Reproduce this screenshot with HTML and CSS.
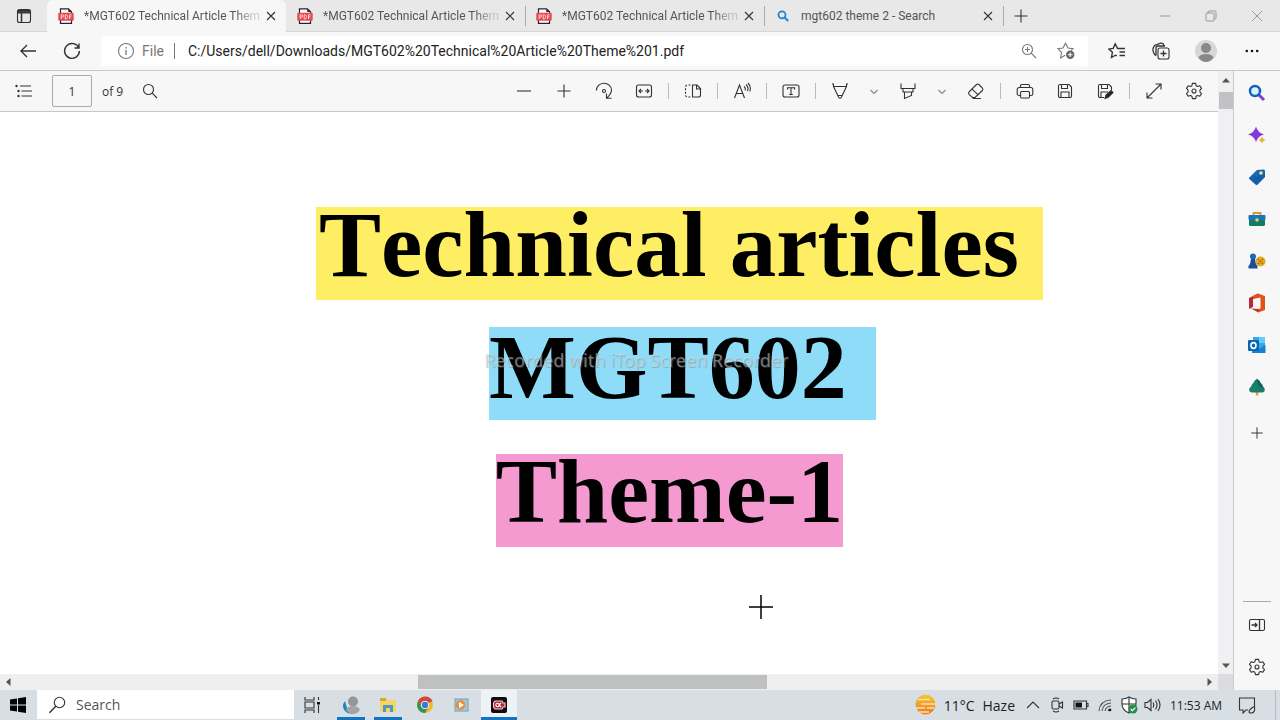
FILE: index.html
```html
<!DOCTYPE html>
<html lang="en">
<head>
<meta charset="utf-8">
<title>MGT602 Technical Article Theme 1.pdf</title>
<link rel="stylesheet" href="styles.css">
</head>
<body>
<svg class="defs" aria-hidden="true">
  <symbol id="pdf" viewBox="0 0 16 16"><path d="M2.500 .8h8l3 3v11.500h-11z" fill="#fff" stroke="#2b2122" stroke-width="1.200"/><path d="M10.300.8v3.200h3.200z" fill="#2b2122"/><rect x=".3" y="4.800" width="15.400" height="8" rx="1" fill="#e5494f"/><path d="M3.200 11V6.800h1.300a1.100 1.100 0 0 1 0 2.300H3.200M7.200 6.800V11h.8c2 0 2-4.200 0-4.200zM11.500 11V6.800h2.300M11.500 8.900H13.400" fill="none" stroke="#ffe3e3" stroke-width=".9"/></symbol>
  <symbol id="x" viewBox="0 0 16 16"><path d="M4 4l8 8M12 4l-8 8"/></symbol>
  <symbol id="plus" viewBox="0 0 16 16"><path d="M8 1.500v13M1.500 8h13"/></symbol>
  <symbol id="chev" viewBox="0 0 16 16"><path d="M4.500 7L8 10.500 11.500 7"/></symbol>
  <symbol id="gear" viewBox="0 0 18 18"><path d="M7.400 1.400h3.200l.5 2.300 1.500.8 2.200-.8 1.700 2.700-1.600 1.700v1.800l1.600 1.700-1.700 2.700-2.200-.8-1.500.8-.5 2.300H7.400l-.5-2.300-1.500-.8-2.200.8-1.700-2.700 1.600-1.700V8.100L1.500 6.400l1.700-2.700 2.200.8 1.500-.8z" stroke-linejoin="round"/><circle cx="9" cy="9" r="2"/></symbol>
</svg>
<div class="app">
  <header class="tabstrip">
    <button class="tab-actions" aria-label="Tab actions"><svg class="i16" viewBox="0 0 16 16"><rect x="1.500" y="1.500" width="13" height="13" rx="2"/><path d="M1.500 3.500h13M5.500 5v9.500" stroke-width="1.500"/><path d="M2 2.500h12v2.500H2z" fill="#444"/></svg></button>
    <div class="tab active"><svg class="i16 fav"><use href="#pdf"/></svg><a class="title fade" href="#doc">*MGT602 Technical Article Them</a><button aria-label="Close tab"><svg class="i16"><use href="#x"/></svg></button></div>
    <div class="tab"><svg class="i16 fav"><use href="#pdf"/></svg><a class="title fade" href="#doc">*MGT602 Technical Article Them</a><button aria-label="Close tab"><svg class="i16"><use href="#x"/></svg></button></div>
    <div class="tab"><svg class="i16 fav"><use href="#pdf"/></svg><a class="title fade" href="#doc">*MGT602 Technical Article Them</a><button aria-label="Close tab"><svg class="i16"><use href="#x"/></svg></button></div>
    <div class="tab"><svg class="i16 fav" viewBox="0 0 16 16"><circle cx="7" cy="6.800" r="3.500" stroke="#2383cf" stroke-width="1.800"/><path d="M9.700 9.500l3.500 3.500" stroke="#2383cf" stroke-width="2"/></svg><a class="title" href="#doc">mgt602 theme 2 - Search</a><button aria-label="Close tab"><svg class="i16"><use href="#x"/></svg></button></div>
    <button class="new-tab" aria-label="New tab"><svg class="i16"><use href="#plus"/></svg></button>
    <div class="window-controls">
      <button aria-label="Minimize"><svg class="i16" viewBox="0 0 16 16"><path d="M3 8h10"/></svg></button>
      <button aria-label="Restore"><svg class="i16" viewBox="0 0 16 16"><rect x="3" y="5" width="8" height="8" rx="1"/><path d="M5 5V4a1 1 0 0 1 1-1h6a1 1 0 0 1 1 1v6a1 1 0 0 1-1 1h-1"/></svg></button>
      <button aria-label="Close window"><svg class="i16" viewBox="0 0 16 16"><path d="M3 3l10 10M13 3L3 13"/></svg></button>
    </div>
  </header>

  <nav class="addressbar">
    <button aria-label="Back"><svg class="i18" viewBox="0 0 18 18"><path d="M17 9H2M8 3L2 9l6 6" stroke-width="1.400"/></svg></button>
    <button aria-label="Refresh"><svg class="i18" viewBox="0 0 18 18"><path d="M15.800 6A7.400 7.400 0 1 0 16.400 9M16 1.500V6h-4.500" stroke-width="1.400"/></svg></button>
    <div class="omnibox">
      <svg class="i18 grey" viewBox="0 0 18 18"><circle cx="9" cy="9" r="7.500"/><path d="M9 8v5M9 5v1.500" stroke-width="1.300"/></svg>
      <label class="scheme" for="url">File</label>
      <span class="bar"></span>
      <input id="url" type="text" value="C:/Users/dell/Downloads/MGT602%20Technical%20Article%20Theme%201.pdf">
      <button aria-label="Zoom"><svg class="i16 grey" viewBox="0 0 16 16"><circle cx="6.500" cy="6.500" r="5"/><path d="M10.200 10.200L15 15M4 6.500h5M6.500 4v5"/></svg></button>
      <button aria-label="Add to favorites"><svg class="i18 grey" viewBox="0 0 18 18"><path d="M8.200 13.200l-4.600 2.700.9-5.400L1 6.700l5-.7L8.500 1.200 11 6l5 .7-2 2"/><circle cx="13.200" cy="12.800" r="4.200" fill="#666" stroke="none"/><path d="M13.200 10.500v4.600M10.900 12.800h4.600" stroke="#fff"/></svg></button>
    </div>
    <button class="favorites" aria-label="Favorites"><svg class="i18" viewBox="0 0 18 18"><path d="M11 6.500H9.600L7.200 1.800 5.200 6.400.8 7l3.600 3.300-.9 5.200 4-2.300 1.300.7M11 6.500h6M11.500 10H17M11.500 13.500H17" stroke-width="1.400"/></svg></button>
    <button aria-label="Collections"><svg class="i18" viewBox="0 0 18 18"><rect x="6" y="6" width="11" height="11" rx="2"/><path d="M11.500 8.500v6M8.500 11.500h6M4 13.500C2 13 .8 9 1 6.500L2.500 3.500 8.500 1.200c1.500-.3 3 0 3.500 2.200M4 13.500V6q0-2 2-2h7" stroke-width="1.300"/></svg></button>
    <button class="wide" aria-label="Profile"><svg class="i22" viewBox="0 0 22 22"><circle cx="11" cy="11" r="11" fill="#d8d7d4" stroke="none"/><circle cx="11" cy="8" r="5" fill="#888" stroke="none"/><path d="M3.500 17.500Q5 14 11 14t7.500 3.500Q15 22 11 22t-7.500-4.500z" fill="#888" stroke="none"/></svg></button>
    <button class="wide" aria-label="More"><svg class="i16" viewBox="0 0 16 16"><g fill="#111" stroke="none"><circle cx="2.800" cy="8" r="1.300"/><circle cx="8" cy="8" r="1.300"/><circle cx="13.200" cy="8" r="1.300"/></g></svg></button>
  </nav>

  <div class="body">
    <section class="viewer">
      <div class="main-col">
        <div class="toolbar">
          <button class="contents" aria-label="Contents"><svg class="i18" viewBox="0 0 18 18"><path d="M5 4h11M6.500 9H17M6.500 14H17"/><g fill="#333" stroke="none"><circle cx="1.500" cy="4" r="1.200"/><circle cx="3.500" cy="9" r="1.200"/><circle cx="3.500" cy="14" r="1.200"/></g></svg></button>
          <input class="page-no" id="page" type="text" value="1"><label for="page">of 9</label>
          <button class="find" aria-label="Find"><svg class="i16" viewBox="0 0 16 16"><circle cx="6.500" cy="6.500" r="5"/><path d="M10.200 10.200L15 15"/></svg></button>
          <div class="tools">
            <button aria-label="Zoom out"><svg class="i16" viewBox="0 0 16 16"><path d="M1 8h14"/></svg></button>
            <button aria-label="Zoom in"><svg class="i16"><use href="#plus"/></svg></button>
            <button aria-label="Rotate"><svg class="i18" viewBox="0 0 18 18"><path d="M1.500 8.500A7.500 7 0 0 1 16.500 8c0 3.500-2 5.500-4.500 7.800M11.500 11.500v4.800h5"/><circle cx="9" cy="9" r="1.500"/></svg></button>
            <button aria-label="Fit to width"><svg class="i18" viewBox="0 0 18 18"><rect x="1.500" y="3" width="15" height="12" rx="2"/><path d="M4 9h4M10 9h4M6 7L4 9l2 2M12 7l2 2-2 2"/></svg></button>
            <i></i>
            <button aria-label="Page view"><svg class="i18" viewBox="0 0 18 18"><path d="M8.500 3h4.500l3.500 3.500V13a2 2 0 0 1-2 2h-6zM12.500 3v4h4"/><path d="M6.500 3h-3a2 2 0 0 0-2 2v8a2 2 0 0 0 2 2h3" stroke-dasharray="2 1.500"/></svg></button>
            <i></i>
            <button aria-label="Read aloud"><svg class="i18" viewBox="0 0 18 18"><path d="M1.500 16L6.500 3l5 13M3.300 11.500h6.500M11 4.500q2 1.500 1 4M13 2.500q3 2.500 1.500 6.500M15 1q3.500 3.500 1.800 8.500"/></svg></button>
            <i></i>
            <button aria-label="Add text"><svg class="i18" viewBox="0 0 18 18"><rect x="1" y="3" width="16" height="12" rx="2"/><path d="M5.500 7.500V5.800h7v1.700M9 5.800v6.700M7.200 12.500h3.600"/></svg></button>
            <i></i>
            <button aria-label="Draw"><svg class="i18" viewBox="0 0 18 18"><path d="M1 2h1.500v2.500h13V2H17M2.500 4.500L7.500 15q1.500 2.500 3 0l5-10.500M7 13.500h4"/></svg></button>
            <button class="small" aria-label="Draw options"><svg class="i16"><use href="#chev"/></svg></button>
            <button aria-label="Highlight"><svg class="i18" viewBox="0 0 18 18"><path d="M2 1.500v5h14v-5M4 6.500v3.500h10V6.500M5.500 10v6.500l7-3V10"/></svg></button>
            <button class="small" aria-label="Highlight options"><svg class="i16"><use href="#chev"/></svg></button>
            <button aria-label="Erase"><svg class="i18" viewBox="0 0 18 18"><path d="M2 10L9.500 2.500q1.200-1 2.400 0l3.500 3.600q1 1.200 0 2.400L8 15.500H5.500L2 12.300q-1-1.200 0-2.300zM5 7.200l6.500 6M5.500 16.500H14"/></svg></button>
            <i></i>
            <button aria-label="Print"><svg class="i18" viewBox="0 0 18 18"><path d="M4.500 13.500H3a1.800 1.800 0 0 1-1.800-1.800V7.500a2 2 0 0 1 2-2h11.600a2 2 0 0 1 2 2v4.200a1.800 1.800 0 0 1-1.800 1.800h-1.500M4.500 5.500V3.700q0-1.200 1.200-1.200h6.600q1.200 0 1.200 1.200v1.800"/><rect x="4.500" y="9.500" width="9" height="6.500" rx="1.200"/></svg></button>
            <button aria-label="Save"><svg class="i18" viewBox="0 0 18 18"><path d="M3.500 2.500H13L15.500 5v9a1.500 1.500 0 0 1-1.500 1.500H4A1.500 1.500 0 0 1 2.500 14V4q0-1.500 1.500-1.500M5.500 2.500v4h6v-4M5 15.500V10h8v5.500"/></svg></button>
            <button aria-label="Save as"><svg class="i18" viewBox="0 0 18 18"><path d="M8 15.500H4A1.500 1.500 0 0 1 2.500 14V4q0-1.500 1.500-1.500h9L15.500 5v3M5.500 2.500v4h6v-4M5 15.500V10h7"/><path d="M9 16.500l1-3.500 5-4.500 2 2-5 5z" fill="#222"/></svg></button>
            <i></i>
            <button aria-label="Full screen"><svg class="i18" viewBox="0 0 18 18"><path d="M2 16L16 2M10.500 2H16v5.500M2 10.500V16h5.500"/></svg></button>
            <button aria-label="Settings"><svg class="i18"><use href="#gear"/></svg></button>
          </div>
        </div>
        <main class="page" id="doc">
          <h1 class="mark yellow">Technical articles</h1>
          <h1 class="mark blue">MGT602</h1>
          <h1 class="mark pink">Theme-1</h1>
          <svg class="cursor" viewBox="0 0 24 24"><path d="M12 0v24M0 12h24"/></svg>
          <span class="watermark">Recorded with iTop Screen Recorder</span>
        </main>
        <div class="hscroll"><svg class="arrow" viewBox="0 0 16 16"><path d="M10.500 4v8L6 8z"/></svg><div class="track"><div class="thumb"></div></div><svg class="arrow" viewBox="0 0 16 16"><path d="M5.500 4v8L10 8z"/></svg></div>
      </div>
      <div class="vscroll"><svg class="arrow" viewBox="0 0 16 16"><path d="M4 11.500h8L8 7z"/></svg><div class="vthumb"></div><svg class="arrow end" viewBox="0 0 16 16"><path d="M4 5.500h8L8 10z"/></svg><div class="corner"></div></div>
    </section>
    <aside class="sidebar">
      <button aria-label="Search"><svg class="i18" viewBox="0 0 18 18"><path d="M11 11l5 5" stroke="#7a45c8" stroke-width="3"/><circle cx="7" cy="7" r="5" stroke="#1560b8" stroke-width="2.500" fill="#d9f2ff"/></svg></button>
      <button aria-label="Discover"><svg class="i18" viewBox="0 0 18 18"><g stroke="none"><path d="M8 .5q1.500 6 8 8Q9.500 10 8 16.500 6.500 10 0 8.500q6.500-2 8-8z" fill="#8437da"/><path d="M14 10.500q.8 2.700 3.500 3.500-2.700.8-3.500 3.500-.8-2.700-3.500-3.500 2.700-.8 3.500-3.500z" fill="#e5b52b"/></g></svg></button>
      <button aria-label="Shopping"><svg class="i18" viewBox="0 0 18 18"><g stroke="none"><path d="M1.300 9.500L9 2l6.500-.5q1.500 0 1.500 1.500v6L9.500 16.500q-1 1-2 0L1.300 11q-.8-.8 0-1.500z" fill="#1768b8"/><path d="M1 10l8 7 8-8V6z" fill="#0c4e9c" opacity=".4"/><circle cx="13" cy="5" r="1.800" fill="#ffe568"/></g></svg></button>
      <button aria-label="Tools"><svg class="i18" viewBox="0 0 18 18"><path d="M5.500 5.500V3h7v2.500" stroke="#d59b27" stroke-width="1.800"/><g stroke="none"><rect x=".5" y="5" width="17" height="5" rx="1" fill="#1976bd"/><path d="M1 10h16v4.500q0 1.500-1.500 1.500h-13q-1.500 0-1.500-1.500z" fill="#147c62"/><circle cx="9" cy="10" r="1.800" fill="#ead05c"/></g></svg></button>
      <button aria-label="Games"><svg class="i18" viewBox="0 0 18 18"><g stroke="none"><circle cx="5" cy="4.500" r="3" fill="#1d67ba"/><path d="M3 7h4l1 5 1.500 2v2.500H.5V14L2 12z" fill="#164f9f"/><circle cx="12.500" cy="9.500" r="5" fill="#e4a91e"/><g fill="#926315"><circle cx="12.500" cy="9.500" r="1"/><circle cx="10.500" cy="7.500" r=".8"/><circle cx="14.500" cy="7.500" r=".8"/><circle cx="10.500" cy="11.500" r=".8"/><circle cx="14.500" cy="11.500" r=".8"/></g></g></svg></button>
      <button aria-label="Office"><svg class="i20" viewBox="0 0 20 20"><g stroke="none"><path d="M2 5l9-4.500V4L6 6v8l-4 2z" fill="#b52b35"/><path d="M11 .5L18 3v14l-7 2.500V16l2.500-.5v-11L6 6V3z" fill="#e1511c"/><path d="M4 15.500l7.500.5v3.500z" fill="#c92d1d"/></g></svg></button>
      <button aria-label="Outlook"><svg class="i18" viewBox="0 0 18 18"><g stroke="none"><rect x="5" y="1" width="12" height="13" fill="#37a7e5"/><path d="M11 1h6v6h-6z" fill="#62cdf5"/><path d="M4 9l7 4 6.500-4v8H4z" fill="#1783cc"/><rect x="0" y="4" width="11" height="11" rx="1" fill="#0868b5"/></g><ellipse cx="5.500" cy="9.500" rx="2.500" ry="2.900" stroke="#fff" stroke-width="1.600"/></svg></button>
      <button aria-label="Drop"><svg class="i18" viewBox="0 0 18 18"><g stroke="none"><path d="M7.800 12h2.400v5.500H7.800z" fill="#dca630"/><path d="M9 .8q3 1.700 3.800 4.500 2 1.200 2 3.200 2 1 2 3.300 0 2.700-3 2.700H4.200q-3 0-3-2.700 0-2.300 2-3.300 0-2 2-3.200Q6 2.500 9 .8z" fill="#178067"/><path d="M9 1q3 1.500 3.800 4.500 2 1.200 2 3.200l1 3L10 7z" fill="#135f68"/></g></svg></button>
      <button class="add" aria-label="Customize"><svg class="i14"><use href="#plus"/></svg></button>
      <hr>
      <button aria-label="Hide sidebar"><svg class="i18" viewBox="0 0 18 18"><rect x="1.500" y="3.500" width="15" height="11" rx="1.500"/><path d="M11.500 3.500v11M3.500 9H9M7 7l2 2-2 2" stroke-width="1.300"/></svg></button>
      <button aria-label="Sidebar settings"><svg class="i18"><use href="#gear"/></svg></button>
    </aside>
  </div>

  <footer class="taskbar">
    <button class="start" aria-label="Start"><svg class="i18" viewBox="0 0 18 18"><path d="M1 3.500l7-1v6H1zM9 2.300L17 1v7.500H9zM1 9.500h7v6l-7-1zM9 9.500h8V17l-8-1.300z" fill="#000" stroke="none"/></svg></button>
    <label class="search"><svg class="i18" viewBox="0 0 18 18"><circle cx="11.500" cy="6.500" r="5.200"/><path d="M7.800 10.200L1.500 16.800" stroke-width="1.500"/></svg><input type="text" placeholder="Search" aria-label="Search"></label>
    <button class="start" aria-label="Task view"><svg class="i18" viewBox="0 0 18 18"><path d="M2 1v3h9V1M2 17v-3h9v3M2 6h9v6H2zM15.500 1v3M15.500 9v8"/><path d="M14 6h3v2.500h-3z" fill="#111" stroke="none"/></svg></button>
    <div class="apps">
      <button class="run" aria-label="Edge"><svg class="i18" viewBox="0 0 18 18"><g stroke="none"><path d="M3 5Q-1 10 3 15q3 3.500 8 2.500L5 12z" fill="#2381c4"/><circle cx="11" cy="5.500" r="5" fill="#969696"/><path d="M4 14q1.500-4 7-4t7 4q-3 4-7 4t-7-4z" fill="#a3a3a3"/></g></svg></button>
      <button class="run" aria-label="File Explorer"><svg class="i18" viewBox="0 0 18 18"><g stroke="none"><path d="M1 2h6l2 2h8v12H1z" fill="#f5d568"/><path d="M1 2h6v3H1z" fill="#d8a528"/><path d="M4 16V9h10v7h-3v-4H7v4z" fill="#4a9ac4"/></g></svg></button>
      <button aria-label="Chrome"><svg class="i18" viewBox="0 0 18 18"><g stroke="none"><circle cx="9" cy="9" r="8" fill="#e8bc32"/><path d="M9 9l7.500-4A8 8 0 0 0 2 5l3.500 6z" fill="#d3483e"/><path d="M2.100 5A8 8 0 0 0 9 17l3.500-6H5.500z" fill="#339457"/><circle cx="9" cy="9" r="4" fill="#fff"/><circle cx="9" cy="9" r="3.200" fill="#3978db"/></g></svg></button>
      <button aria-label="Media Player"><svg class="i16" viewBox="0 0 16 16"><rect x="1" y="2" width="13" height="12" fill="#a5c9d9" stroke="#75a7bd"/><circle cx="6.500" cy="8" r="5" fill="#e39145" stroke="none"/><path d="M5 5l5 3-5 3z" fill="#fff" stroke="none"/></svg></button>
      <button class="run current" aria-label="Screen Recorder"><svg class="i16" viewBox="0 0 16 16"><rect width="16" height="16" rx="2" fill="#100c0d" stroke="none"/><path d="M4 4h7l1 2h2v4h-2l-1 2H4L2.500 10V6z" fill="#bb2442" stroke="#f2cdd4"/><circle cx="6.500" cy="8" r="1.700" stroke="#fff"/><path d="M8 8l2-2M8 8l2 2" stroke="#fff"/></svg></button>
    </div>
    <div class="tray">
      <button class="weather"><svg class="i22" viewBox="0 0 22 22"><defs><linearGradient id="sun" x2="0" y2="1"><stop stop-color="#f6c62f"/><stop offset="1" stop-color="#ec7928"/></linearGradient></defs><circle cx="11.500" cy="10.500" r="10" fill="url(#sun)" stroke="none"/><path d="M4 5.500h12M7 10h15M2 14h9M13 14h7M5 18h10" stroke="#fbe1ac" stroke-width="1.300"/></svg><span>11°C</span><span>Haze</span></button>
      <button aria-label="Hidden icons"><svg class="i16" viewBox="0 0 16 16"><path d="M2 11l6-6 6 6"/></svg></button>
      <button aria-label="Meet now"><svg class="i16" viewBox="0 0 16 16"><rect x="3" y="4" width="7" height="8" rx="1.500"/><path d="M10 7l3.500-2v6L10 9M4 2q3-2 6 0M4 14q3 2 6 0"/></svg></button>
      <button aria-label="Battery"><svg class="i16" viewBox="0 0 16 16"><path d="M1 4h12.500v8H1zM13.500 6.500H15v3h-1.500"/><path d="M2.500 5.500H9v5H2.500z" fill="#111" stroke="none"/></svg></button>
      <button aria-label="Network"><svg class="i16" viewBox="0 0 16 16"><path d="M2 14Q3 3.500 14 3M5 14Q6 6.500 14 6M8 14q1-4.500 6-5M11 14q.5-2 3-2" stroke="#555"/><circle cx="13" cy="13" r="1.300" fill="#111" stroke="none"/></svg></button>
      <button aria-label="Security"><svg class="i18" viewBox="0 0 18 18"><path d="M9 1q3 2 7 2v5q0 6-7 9-7-3-7-9V3q4 0 7-2z" fill="#fff"/><path d="M9 1v16M2 8h14"/><circle cx="13" cy="13" r="4.500" fill="#23914b" stroke="none"/><path d="M10.800 13l1.600 1.600 3-3" stroke="#fff"/></svg></button>
      <button aria-label="Volume"><svg class="i18" viewBox="0 0 18 18"><path d="M1 6.500h2.500L7 3.500v11l-3.500-3H1zM9 6.500q1.500 2.500 0 5M11.500 4.500q3 4.500 0 9M14 3q4 6 0 12"/></svg></button>
      <button class="clock">11:53 AM</button>
      <button class="note" aria-label="Notifications"><svg class="i18" viewBox="0 0 18 18"><path d="M10 14H8l-3 3v-3H1.500V2h15v8M11 16q0-3 5.500-5.500Q17.500 17 13 17q-2 0-2-1z"/></svg></button>
      <span class="desk"></span>
    </div>
  </footer>
</div>
</body>
</html>
```
FILE: styles.css
```css
* { box-sizing: border-box; }
body { margin: 0; font-family: "Open Sans", "Noto Sans", sans-serif; font-size: 12px; color: #333; }
button { border: 0; padding: 0; background: none; font: inherit; color: inherit; display: flex; align-items: center; justify-content: center; flex: none; }
input { border: 0; padding: 0; background: none; font: inherit; color: inherit; min-width: 0; outline: 0; }
a { color: inherit; text-decoration: none; }
svg { fill: none; stroke: #333; stroke-width: 1.1; flex: none; display: block; }
.defs { position: absolute; width: 0; height: 0; }
.i14 { width: 14px; height: 14px; }
.i16 { width: 16px; height: 16px; }
.i18 { width: 18px; height: 18px; }
.i20 { width: 20px; height: 20px; }
.i22 { width: 22px; height: 22px; }
.grey { stroke: #777; }
.app { display: flex; flex-direction: column; height: 100vh; overflow: hidden; background: #f7f7f8; }

.tabstrip { display: flex; height: 32px; background: #e8e8e8; border-bottom: 1px solid #d6d6d6; flex: none; }
.tab-actions { width: 47px; }
.tab { display: flex; align-items: center; flex: 0 1 239px; min-width: 0; padding: 0 7px 0 11px; position: relative; }
.tab.active { background: #f7f7f8; border-radius: 6px 6px 0 0; height: 32px; }
.tab:not(.active)::after { content: ""; position: absolute; right: -1px; top: 6px; width: 1px; height: 20px; background: #aaa; }
.fav { stroke: none; }
.title { flex: 1; min-width: 0; margin: 0 3px 0 10px; overflow: hidden; font-family: Roboto, sans-serif; white-space: nowrap; color: #555; }
.fade { mask-image: linear-gradient(to right, #000 86%, rgba(0, 0, 0, .25) 96%); }
.new-tab { width: 36px; }
.window-controls { display: flex; margin-left: auto; }
.window-controls button { width: 46px; }
.window-controls svg { stroke: #999; stroke-width: 1; }

.addressbar { display: flex; align-items: center; height: 39px; padding: 0 5px 0 6px; border-bottom: 1px solid #c8c8c8; flex: none; }
.addressbar > button { width: 44px; height: 32px; }
.addressbar > .favorites { margin-left: 7px; }
.addressbar > .wide { width: 46px; }
.omnibox { display: flex; align-items: center; flex: 1; height: 30px; margin-left: 7px; padding: 0 4px 0 16px; background: #fff; border-radius: 3px; font-family: Roboto, sans-serif; font-size: 14px; }
.scheme { margin-left: 7px; color: #777; }
.bar { width: 1px; height: 16px; margin: 0 13px 0 10px; background: #777; }
.omnibox input { flex: 1; color: #222; }
.omnibox button { width: 37px; height: 30px; }

.body { display: flex; flex: 1; min-height: 0; }
.viewer { display: flex; flex: 1; min-width: 0; border-right: 1px solid #ccc; }
.main-col { display: flex; flex-direction: column; flex: 1; min-width: 0; }
.toolbar { display: flex; align-items: center; height: 41px; padding: 0 4px; border-bottom: 1px solid #c8c8c8; flex: none; }
.toolbar button { width: 40px; height: 36px; }
.page-no { width: 40px; height: 32px; margin: 0 10px 0 8px; border: 1px solid #aaa; border-radius: 2px; text-align: center; }
.toolbar .find { margin-left: 7px; }
.tools { display: flex; align-items: center; margin-left: auto; }
.tools .small { width: 28px; }
.tools .small svg { stroke: #888; }
.tools i { width: 1px; height: 16px; margin: 0 4px; background: #bbb; }

.page { position: relative; flex: 1; min-height: 0; display: flex; flex-direction: column; align-items: center; padding: 95px 0 0 141px; background: #fff; overflow: hidden; }
.mark { flex: none; margin: 0; padding: 0 24px 18px 3px; font: bold 93px/75px "Liberation Serif", serif; font-kerning: none; color: #000; white-space: nowrap; }
.yellow { background: #fdee64; }
.blue { margin: 27px 0 0 6px; padding: 3px 29px 15px 0; font-size: 92px; background: #8edcf8; }
.pink { margin: 34px 20px 0 0; padding: 0 0 18px; font-size: 92px; background: #f59ad0; }
.cursor { position: absolute; left: 749px; top: 483px; width: 24px; height: 24px; stroke: #000; stroke-width: 1.5; }
.watermark { position: absolute; left: 484px; top: 236px; font: 18px/24px "Noto Sans", sans-serif; white-space: nowrap; color: rgba(220, 220, 220, .5); text-shadow: 1px 1px 1px rgba(110, 110, 110, .4); }

.arrow { width: 16px; height: 16px; stroke: none; fill: #555; }
.hscroll { display: flex; height: 16px; background: #efefef; flex: none; }
.track { flex: 1; padding: 1px 0 0 33%; }
.thumb { width: 44%; height: 14px; min-width: 349px; background: #bfc0c0; }
.vscroll { display: flex; flex-direction: column; width: 15px; background: #f0eff1; overflow: hidden; flex: none; }
.vthumb { width: 14px; height: 17px; margin: 5px 0 0 1px; background: #c2c1c3; }
.vscroll .end { margin-top: auto; }
.corner { height: 16px; background: #dadcdd; flex: none; }
.sidebar { display: flex; flex-direction: column; align-items: center; width: 46px; padding: 1px 0 2px; flex: none; }
.sidebar button { width: 46px; height: 42px; }
.sidebar .add { margin-top: 4px; }
.sidebar hr { width: 28px; height: 1px; margin: auto 0 2px; border: 0; background: #aaa; }

.taskbar { display: flex; height: 30px; background: #d7dee4; color: #222; flex: none; }
.start { width: 36px; }
.search { display: flex; align-items: center; flex: 0 1 257px; height: 29px; margin-left: 1px; padding-left: 11px; background: #fff; font-size: 14px; }
.search input { flex: 1; margin-left: 10px; }
.search input::placeholder { color: #555; opacity: 1; }
.apps { display: flex; gap: 1px; margin-left: 3px; }
.apps button { width: 36px; position: relative; }
.run::after { content: ""; position: absolute; left: 4px; right: 4px; bottom: 0; height: 3px; background: #1474c4; }
.current { background: #eef2f4; }
.current::after { left: 0; right: 0; }
.tray { display: flex; align-items: center; margin-left: auto; }
.tray button { width: 24px; height: 30px; }
.tray .weather { width: auto; margin-right: 6px; gap: 8px; font-size: 14px; }
.tray .clock { width: 62px; }
.tray .note { width: 40px; }
.desk { width: 5px; height: 30px; margin-left: 8px; border-left: 1px solid #b4bcc4; }
```
